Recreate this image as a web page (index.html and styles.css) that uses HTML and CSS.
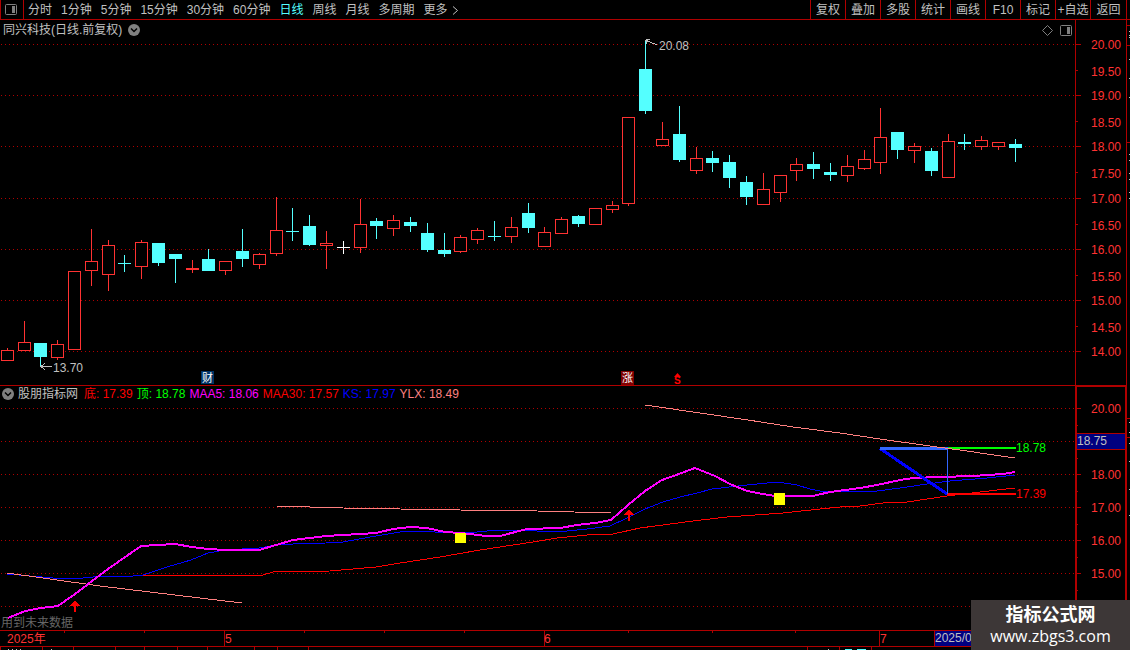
FILE: index.html
```html
<!DOCTYPE html>
<html lang="zh-CN">
<head>
	<meta charset="utf-8">
	<title>同兴科技 日线</title>
	<link rel="stylesheet" href="styles.css">
</head>
<body>
	<header class="toolbar">
		<button class="panel-btn" aria-label="侧栏">
			<svg width="13" height="11"><rect x="0.5" y="0.5" width="11" height="10" rx="1" fill="none" stroke="#808080"/><rect x="7" y="2" width="3" height="7" fill="#808080"/></svg>
		</button>
		<nav class="periods">
			<a href="#">分时</a>
			<a href="#">1分钟</a>
			<a href="#">5分钟</a>
			<a href="#">15分钟</a>
			<a href="#">30分钟</a>
			<a href="#">60分钟</a>
			<a href="#" class="active">日线</a>
			<a href="#">周线</a>
			<a href="#">月线</a>
			<a href="#">多周期</a>
			<a href="#" class="more">更多<svg width="7" height="9"><path d="M1 0.5L5.5 4.5L1 8.5" fill="none" stroke="#c0c0c0"/></svg></a>
		</nav>
		<div class="tools">
			<button>复权</button>
			<button>叠加</button>
			<button>多股</button>
			<button>统计</button>
			<button>画线</button>
			<button>F10</button>
			<button>标记</button>
			<button>+自选</button>
			<button>返回</button>
		</div>
	</header>

	<main>
		<section class="price">
			<div class="pane-head">
				<span>同兴科技(日线.前复权)</span>
				<svg width="12" height="12"><circle cx="6" cy="6" r="6" fill="#808080"/><path d="M3 4.5L6 7.5L9 4.5" fill="none" stroke="#000" stroke-width="1.5"/></svg>
				<div class="pane-icons">
					<svg width="11" height="11"><path d="M5.5 0.5L10.5 5.5L5.5 10.5L0.5 5.5Z" fill="none" stroke="#808080"/></svg>
					<svg width="12" height="11"><rect x="0.5" y="0.5" width="11" height="10" rx="1" fill="none" stroke="#808080"/><rect x="7" y="2" width="3" height="7" fill="#808080"/></svg>
				</div>
			</div>
			<svg class="chart">
				<g transform="translate(0 -40)">
					<g id="priceGrid"></g>
					<g id="candles"></g>
					<g fill="none" stroke="#c0c0c0" class="crisp">
						<path d="M41 366.5H52M45 363L41 366.5L45 370"/>
						<path d="M645 40L657 45M650 39.5L646 40L647 44"/>
					</g>
					<text x="53" y="372" class="note">13.70</text>
					<text x="659" y="50" class="note">20.08</text>
					<rect x="201" y="371" width="13" height="13" fill="#003366"/>
					<text x="202" y="382" class="badge">财</text>
					<rect x="621" y="371" width="13" height="14" fill="#800000"/>
					<text x="622" y="382" class="badge">涨</text>
					<path d="M677.5 373L681 377H674Z" fill="#f00"/>
					<text x="674" y="384" class="sell">S</text>
				</g>
			</svg>
		</section>
		<div class="axis axis-price"><svg id="priceAxis"></svg></div>

		<section class="indicator">
			<div class="pane-head legend">
				<svg width="12" height="12"><circle cx="6" cy="6" r="6" fill="#808080"/><path d="M3 4.5L6 7.5L9 4.5" fill="none" stroke="#000" stroke-width="1.5"/></svg>
				<span class="name">股朋指标网</span>
				<span class="red">底: 17.39</span>
				<span class="green">顶: 18.78</span>
				<span class="magenta">MAA5: 18.06</span>
				<span class="red">MAA30: 17.57</span>
				<span class="blue">KS: 17.97</span>
				<span class="salmon">YLX: 18.49</span>
			</div>
			<svg class="chart">
				<g transform="translate(0 -402)">
					<g id="indicatorGrid"></g>
					<text x="1" y="627" class="future">用到未来数据</text>
					<g id="lines"></g>
					<g class="crisp">
						<path d="M880 448.5L947 494" stroke="#0000ff" stroke-width="3"/>
						<rect x="947" y="447" width="69" height="2" fill="#00ff00"/>
						<rect x="947" y="493" width="69" height="2" fill="#ff0000"/>
						<rect x="880" y="447" width="68" height="3" fill="#3366ff"/>
						<rect x="947" y="449" width="1" height="45" fill="#3366ff"/>
						<path d="M937 447L960 450L987 454L1015 458" fill="none" stroke="#ff8080"/>
						<rect x="455" y="533" width="11" height="10" fill="#ffff00"/>
						<rect x="774" y="493" width="11" height="12" fill="#ffff00"/>
						<path d="M75 600L80 606H76V612H74V606H70Z" fill="#ff0000"/>
						<path d="M629 509L634 515H630V521H628V515H624Z" fill="#ff0000"/>
					</g>
					<text x="1016" y="452" class="top">18.78</text>
					<text x="1016" y="498" class="bottom">17.39</text>
				</g>
			</svg>
		</section>
		<div class="axis axis-indicator"><svg id="indicatorAxis"></svg></div>
		<svg class="edge crisp" id="edge"></svg>
	</main>

	<footer>
		<svg class="timeline">
			<g id="dateTicks"></g>
			<rect x="935" y="0" width="80" height="15" fill="#000080"/>
			<text x="7" y="12">2025年</text>
			<text x="225" y="12">5</text>
			<text x="544" y="12">6</text>
			<text x="880" y="12">7</text>
			<text x="935" y="11" class="cursor">2025/0</text>
		</svg>
		<svg class="tabs crisp" id="tabs"></svg>
	</footer>

	<div class="site">
		<strong>指标公式网</strong>
		<span>www.zbgs3.com</span>
	</div>
	<script src="script.js"></script>
</body>
</html>
```

FILE: styles.css
```css
*{
	box-sizing: border-box;
}
body{
	margin: 0;
	height: 100vh;
	display: flex;
	flex-direction: column;
	overflow: hidden;
	background: #000;
	color: #c0c0c0;
	font-family: "Liberation Sans", "Noto Sans CJK SC", sans-serif;
	font-size: 12px;
	line-height: 18px;
}
svg{
	display: block;
	flex-shrink: 0;
}
.crisp{
	shape-rendering: crispEdges;
}
.toolbar{
	display: flex;
	height: 20px;
	border-left: 1px solid #b00000;
	border-bottom: 1px solid #b00000;
	white-space: nowrap;
}
button{
	padding: 0;
	border: none;
	background: none;
	color: #c0c0c0;
	font: inherit;
	cursor: pointer;
}
.panel-btn{
	width: 23px;
	padding-left: 4px;
	border-right: 1px solid #b00000;
}
.periods{
	display: flex;
	gap: 9px;
	padding-top: 1px;
	padding-left: 4px;
}
.periods a{
	color: #c0c0c0;
	text-decoration: none;
}
.periods .active{
	color: #54ffff;
}
.periods .more{
	display: flex;
	align-items: center;
	gap: 4px;
}
.tools{
	display: flex;
	margin-left: auto;
	padding-right: 3px;
}
.tools button{
	width: 35px;
	padding-top: 1px;
	border-left: 1px solid #b00000;
}
.tools button:last-child{
	width: 37px;
	border-right: 1px solid #b00000;
}
main{
	flex: 1;
	min-height: 0;
	display: grid;
	grid-template-columns: minmax(0, 1fr) 52px 3px;
	grid-template-rows: 366px minmax(0, 1fr);
}
section{
	display: flex;
	flex-direction: column;
	min-width: 0;
	min-height: 0;
}
.price{
	border-bottom: 1px solid #b00000;
}
.pane-head{
	display: flex;
	align-items: center;
	gap: 6px;
	height: 20px;
	padding: 0 3px;
	white-space: nowrap;
}
.pane-icons{
	display: flex;
	gap: 7px;
	margin-left: auto;
}
.legend{
	height: 16px;
	padding: 0 2px;
	gap: 4px;
}
.name{
	margin-right: 2px;
}
.chart{
	width: 100%;
	flex: 1;
	min-height: 0;
	overflow: visible;
}
.axis{
	border: 1px solid #b00000;
	border-top: none;
}
.axis svg, .edge{
	width: 100%;
	height: 100%;
}
.axis-indicator{
	border: 2px solid #b00000;
	border-top-width: 1px;
	border-bottom: none;
}
.edge{
	grid-column: 3;
	grid-row: 1 / 3;
}
text{
	fill: #ff3232;
}
text.top{
	fill: #0f0;
}
text.bottom, text.sell{
	fill: #f00;
}
text.note, text.cursor{
	fill: #c0c0c0;
}
text.badge{
	fill: #fff;
	font-size: 11px;
}
text.sell{
	font-size: 10px;
	font-weight: bold;
}
text.future{
	fill: #666;
}
footer{
	border-top: 1px solid #b00000;
}
.timeline{
	width: 100%;
	height: 16px;
	border-bottom: 1px solid #b00000;
}
.tabs{
	width: 100%;
	height: 3px;
}
.site{
	position: absolute;
	right: 0;
	bottom: 0;
	width: 159px;
	height: 50px;
	padding-top: 4px;
	display: flex;
	flex-direction: column;
	align-items: center;
	background: #3d3737;
	color: #fff;
}
.site strong{
	font-size: 18px;
	line-height: 22px;
}
.site span{
	font-family: "Open Sans", sans-serif;
	font-size: 16px;
	line-height: 20px;
}
.red{
	color: #f00;
}
.green{
	color: #0f0;
}
.magenta{
	color: #f0f;
}
.blue{
	color: #00f;
}
.salmon{
	color: #ff8080;
}
```

FILE: script.js
```js
const RED = '#ff3232';
const CYAN = '#54ffff';
const LINE = '#b00000';

const byId = (id) => document.getElementById(id);
const rect = (x, y, w, h, fill) => `<rect x="${x}" y="${y}" width="${w}" height="${h}" fill="${fill}"/>`;

// high, body top, body bottom, low, kind (u = up, d = down, e = equal)
const candles = [
	[348,350,361,361,'u'], [321,342,351,351,'u'], [343,343,357,366,'d'], [340,344,358,360,'u'],
	[271,271,350,350,'u'], [229,261,271,286,'u'], [240,245,275,291,'u'], [255,263,264,272,'d'],
	[240,242,267,279,'u'], [243,243,263,266,'d'], [254,254,259,283,'d'], [260,268,270,273,'u'],
	[249,259,271,271,'d'], [261,261,271,275,'u'], [229,251,259,267,'d'], [253,254,265,269,'u'],
	[197,230,254,256,'u'], [208,231,232,241,'d'], [215,226,245,246,'d'], [231,243,246,269,'u'],
	[241,247,248,254,'e'], [199,224,248,253,'u'], [218,221,226,239,'d'], [215,220,229,236,'u'],
	[217,222,226,232,'d'], [223,233,250,252,'d'], [233,250,254,257,'d'], [235,237,252,253,'u'],
	[228,230,240,244,'u'], [221,236,237,241,'d'], [217,227,237,243,'u'], [203,213,228,233,'d'],
	[227,232,247,247,'u'], [217,219,234,234,'u'], [215,216,224,227,'d'], [208,208,225,225,'u'],
	[201,205,210,213,'u'], [117,117,204,206,'u'], [40,69,111,114,'d'], [122,139,146,146,'u'],
	[106,134,160,162,'d'], [147,158,171,174,'u'], [151,158,163,172,'d'], [155,162,178,188,'d'],
	[176,182,197,205,'d'], [173,189,205,205,'u'], [175,175,193,202,'u'], [158,164,171,181,'u'],
	[152,164,169,179,'d'], [163,172,175,181,'d'], [155,166,176,182,'u'], [150,159,169,170,'u'],
	[108,137,163,174,'u'], [132,132,150,159,'d'], [143,146,151,163,'u'], [148,151,171,176,'d'],
	[134,141,178,178,'u'], [134,142,144,150,'d'], [136,140,147,150,'u'], [142,142,147,150,'u'],
	[139,144,148,162,'d']
];

byId('candles').innerHTML = candles.map(([high, top, bottom, low, kind], i) => {
	const x = Math.floor(7.3 + 16.8 * i);
	const color = kind === 'u' ? RED : kind === 'd' ? CYAN : '#ffffff';
	let out = rect(x, high, 1, low - high, color) + rect(x - 6, top, 13, bottom - top, color);
	if (kind === 'u' && bottom - top > 2) {
		out += rect(x - 5, top + 1, 11, bottom - top - 2, '#000');
	}
	return out;
}).join('');

// dotted rows
function grid(id, rows) {
	byId(id).innerHTML = rows.map((y) =>
		`<line class="crisp" x1="1" x2="100%" y1="${y + 0.5}" y2="${y + 0.5}" stroke="${LINE}" stroke-dasharray="1 3"/>`).join('');
}
grid('priceGrid', [44, 95, 146, 198, 249, 300, 351]);
grid('indicatorGrid', [408, 441, 474, 507, 540, 573, 606]);

const label = (x, y, value) => `<text x="${x}" y="${y}" text-anchor="end">${value}</text>`;

const priceRows = [24, 50, 75, 101, 126, 152, 178, 204, 229, 255, 280, 306, 331];
byId('priceAxis').innerHTML = priceRows.map((y, i) =>
	rect(0, y, i % 2 ? 2 : 5, 1, LINE) + label(45, y + (i % 2 ? 6 : 5), (20 - i / 2).toFixed(2))).join('');

const axisRows = [[21, 20], [54, 0], [87, 18], [120, 17], [153, 16], [186, 15]];
byId('indicatorAxis').innerHTML = axisRows.map(([y, value]) =>
	rect(0, y, 4, 1, LINE) + rect(0, y + 17, 1, 1, LINE) + (value ? label(44, y + 5, value.toFixed(2)) : '')).join('') +
	rect(0, 46, 48, 17, LINE) + rect(0, 47, 48, 15, '#000080') + '<text x="0" y="58" class="cursor">18.75</text>';

const lines = [
	['#0000ff', 1, '7,574 30,576 53,578 83,578 103,576 133,576 143,575 167,567 191,560 208,553 225,550 259,548 276,545 293,544 326,543 343,542 376,536 400,532 415,531 435,532 467,533 487,531 503,530 537,531 567,531 587,529 610,526 627,518 645,509 663,502 680,497 697,493 712,489 747,485 767,483 778,482 797,485 810,489 820,491 840,491 870,492 907,487 927,484 950,481 987,478 1015,475'],
	['#ff0000', 1, '143,575 167,575 263,575 273,572 330,571 376,567 400,563 440,557 480,550 533,542 557,538 587,535 613,534 640,528 693,521 727,517 783,513 820,509 840,507 860,506 883,503 907,502 947,496 980,492 1015,488'],
	['#ff8080', 1, '7,573 50,579 100,586 150,592 200,598 242,603'],
	['#ff8080', 1, '276,506 343,508 400,509 460,510 537,511 611,513'],
	['#ff8080', 1, '645,405 700,413 748,420 793,427 840,433 880,439 937,447'],
	['#ff00ff', 2, '8,618 25,611 41,608 58,606 75,594 108,569 141,546 158,545 175,544 192,547 208,549 225,550 259,550 276,545 293,540 326,536 343,535 376,533 393,529 410,527 427,528 445,532 460,533 478,535 486,536 500,536 527,529 560,528 577,525 595,523 611,520 628,505 645,491 662,480 679,474 695,468 715,476 730,484 747,491 763,494 775,496 813,496 830,492 860,488 877,485 900,480 913,478 940,477 973,476 1003,474 1015,472']
];
byId('lines').innerHTML = lines.map(([color, width, points]) =>
	`<polyline class="crisp" fill="none" stroke="${color}" stroke-width="${width}" points="${points}"/>`).join('');

byId('dateTicks').innerHTML = [224, 544, 879, 934].map((x) => rect(x, 0, 1, 16, LINE)).join('') +
	[64, 144, 304, 384, 464, 628, 712, 795].map((x) => rect(x, 0, 1, 2, LINE)).join('');

byId('tabs').innerHTML = [0, 42, 73, 115, 144, 177, 207, 254, 277, 308, 807, 839, 871].map((x) => rect(x, 0, 1, 3, LINE)).join('') +
	[8, 12, 16, 20, 51, 828].map((x) => rect(x, 2, 1, 1, '#c0c0c0')).join('') +
	rect(845, 2, 7, 1, CYAN) + rect(857, 2, 9, 1, CYAN);

byId('edge').innerHTML = [5, 25, 122, 398, 417].map((y) => rect(0, y, 3, 1, LINE)).join('') +
	[11, 15, 17, 39, 58, 77, 134, 140, 153, 159, 172, 178, 402, 412, 423, 441, 469, 495].map((y) => rect(2, y, 1, 1, '#c0c0c0')).join('');
```
